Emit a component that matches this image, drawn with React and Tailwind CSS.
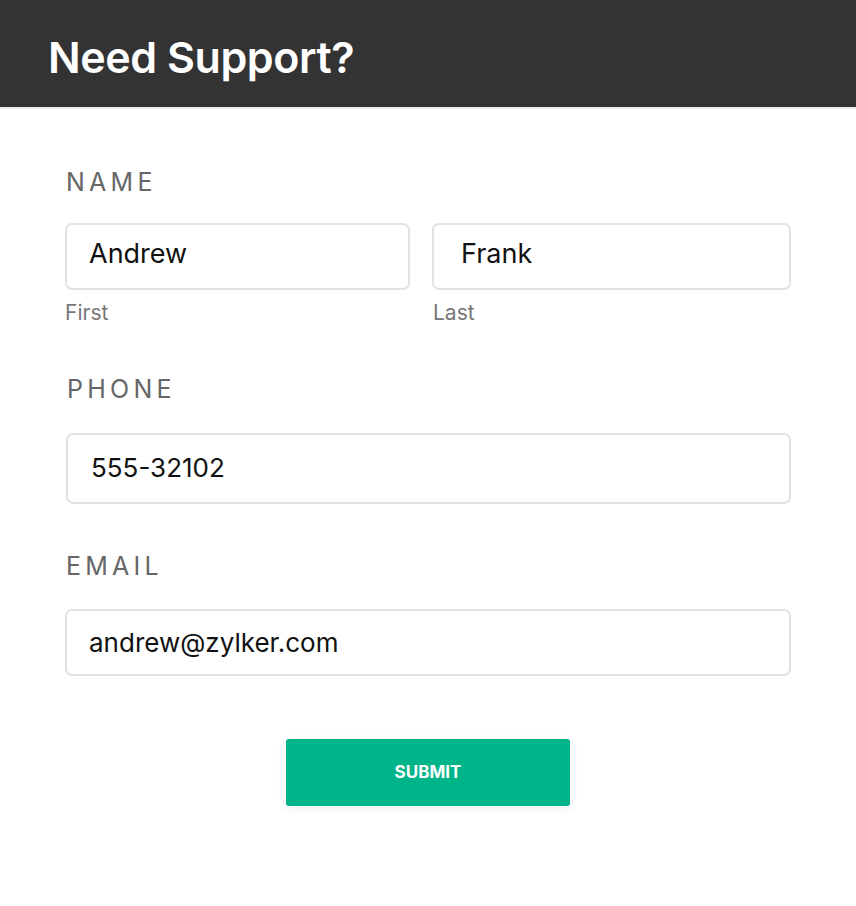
export default function App() {
  const font = { fontFamily: 'Inter, "Open Sans", sans-serif' };
  return (
    <div className="w-[856px] h-[906px] bg-white" style={font}>
      <div className="h-[109px] bg-[#333333] pl-[48px] pt-[36px] border-b-2 border-[#ececec]">
        <h1 className="text-[43px] font-semibold text-white leading-none tracking-[-0.01em]">Need Support?</h1>
      </div>
      <div className="pl-[65px] pr-[65px]">
        <div className="mt-[60px] text-[25px] leading-[26px] tracking-[0.17em] text-[#666666] pl-[1px]">NAME</div>
        <div className="mt-[28px] flex gap-[22px]">
          <div className="w-[345px]">
            <div className="h-[67px] rounded-[7px] border-2 border-[#e2e2e2] flex items-center pl-[22px] pb-[4px] text-[27px] text-[#111]">Andrew</div>
            <div className="mt-[12px] text-[21px] leading-[22px] text-[#777]">First</div>
          </div>
          <div className="flex-1">
            <div className="h-[67px] rounded-[7px] border-2 border-[#e2e2e2] flex items-center pl-[27px] pb-[4px] text-[27px] text-[#111]">Frank</div>
            <div className="mt-[12px] text-[21px] leading-[22px] text-[#777] pl-[1px]">Last</div>
          </div>
        </div>
        <div className="mt-[52px] text-[25px] leading-[26px] tracking-[0.17em] text-[#666666] pl-[2px]">PHONE</div>
        <div className="mt-[31px] ml-[1px] h-[71px] rounded-[7px] border-2 border-[#e2e2e2] flex items-center pl-[23px] pb-[2px] text-[26px] text-[#111]">555-32102</div>
        <div className="mt-[49px] text-[25px] leading-[26px] tracking-[0.17em] text-[#666666] pl-[1px]">EMAIL</div>
        <div className="mt-[30px] h-[67px] rounded-[7px] border-2 border-[#e2e2e2] flex items-center pl-[22px] pb-[1px] text-[26px] text-[#111]">andrew@zylker.com</div>
        <div className="mt-[63px] flex justify-center">
          <button className="w-[284px] h-[67px] rounded-[3px] bg-[#00b48a] text-white font-bold text-[17px] shadow-[0_2px_10px_rgba(0,0,0,0.08)]">SUBMIT</button>
        </div>
      </div>
    </div>
  );
}
